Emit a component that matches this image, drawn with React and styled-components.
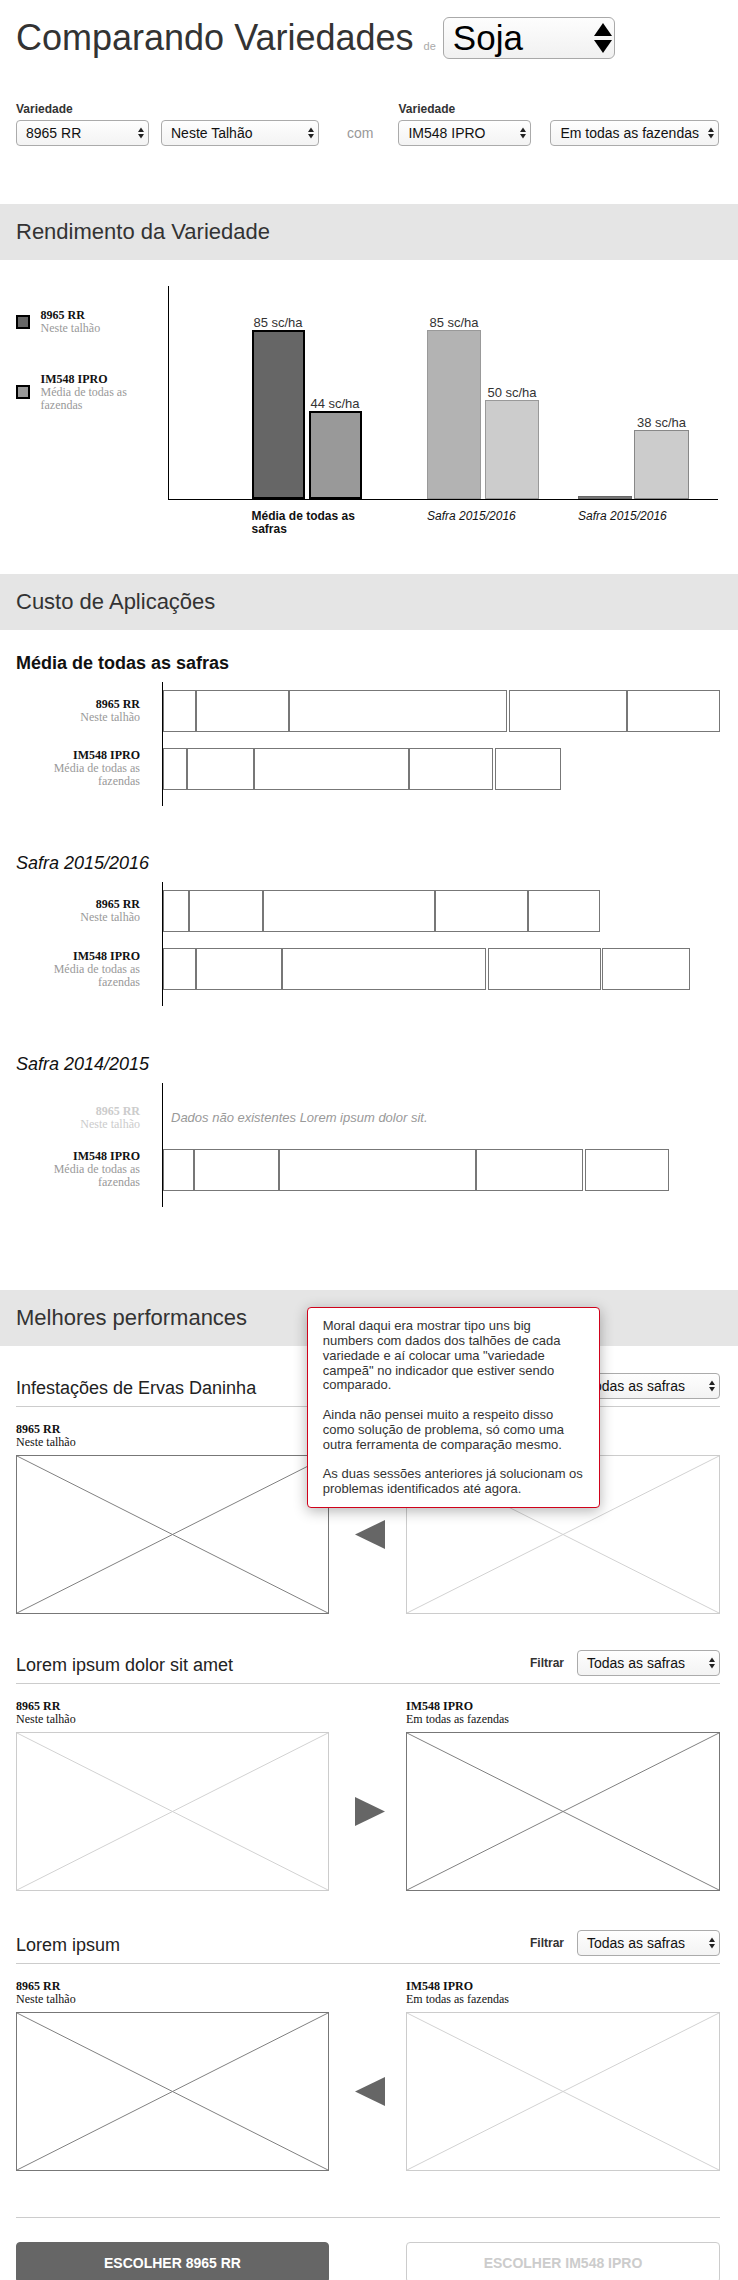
import React from "react";
import styled, { createGlobalStyle } from "styled-components";

const SANS = `"Liberation Sans", Arial, Helvetica, sans-serif`;
const SERIF = `"Liberation Serif", "Times New Roman", serif`;

const GlobalStyle = createGlobalStyle`
  *, *::before, *::after { box-sizing: border-box; }
  html, body { margin: 0; padding: 0; background: #fff; }
  body { font-family: ${SANS}; color: #333; }
`;

const Page = styled.main`
  width: 738px;
  padding-bottom: 12px;
`;

const Padded = styled.div`
  padding: 0 18px 0 16px;
`;

/* ---------- header ---------- */
const Header = styled.header`
  display: flex;
  align-items: baseline;
  padding: 17px 18px 0 16px;
`;

const Title = styled.h1`
  margin: 0;
  font-size: 36px;
  line-height: 42px;
  font-weight: normal;
  color: #333;
`;

const TitleJoin = styled.span`
  margin: 0 7px 0 10px;
  font-size: 11px;
  color: #aaa;
`;

const CropSelect = styled.div`
  display: flex;
  align-items: center;
  justify-content: space-between;
  width: 172px;
  height: 42px;
  padding: 0 2px 0 9px;
  border: 1px solid #a9a9a9;
  border-radius: 6px;
  background: linear-gradient(#fdfdfd, #f1f1f1);
  font-size: 35px;
  line-height: 40px;
  color: #000;
`;

const BigArrows = () => (
  <svg width="18" height="30" viewBox="0 0 18 30" aria-hidden="true">
    <polygon points="0,13 9,0 18,13" fill="#000" />
    <polygon points="0,17 18,17 9,30" fill="#000" />
  </svg>
);

const SmallArrows = () => (
  <svg width="6" height="12" viewBox="0 0 6 12" aria-hidden="true">
    <polygon points="0,5 3,0.5 6,5" fill="#222" />
    <polygon points="0,7 6,7 3,11.5" fill="#222" />
  </svg>
);

/* ---------- selectors row ---------- */
const Controls = styled.div`
  display: flex;
  align-items: flex-end;
  margin-top: 43px;
  padding: 0 18px 0 16px;
`;

const ControlGroup = styled.div`
  display: flex;
  flex-direction: column;
`;

const FieldLabel = styled.div`
  font-size: 12px;
  line-height: 14px;
  font-weight: bold;
  color: #333;
  margin-bottom: 4px;
`;

const SelectRow = styled.div`
  display: flex;
  gap: ${(p) => p.$gap}px;
`;

const SelectBox = styled.div`
  display: flex;
  align-items: center;
  justify-content: space-between;
  width: ${(p) => p.$w}px;
  height: 26px;
  padding: 0 4px 0 9px;
  border: 1px solid #ababab;
  border-radius: 4px;
  background: linear-gradient(#fefefe, #f3f3f3);
  font-size: 14px;
  line-height: 24px;
  color: #111;
  white-space: nowrap;
`;

const Connector = styled.span`
  font-size: 14px;
  line-height: 26px;
  color: #999;
  margin: 0 25px 0 28px;
`;

const Select = ({ w, children }) => (
  <SelectBox $w={w}>
    <span>{children}</span>
    <SmallArrows />
  </SelectBox>
);

/* ---------- section band ---------- */
const Band = styled.h2`
  margin: ${(p) => p.$mt || 0}px 0 0;
  height: 56px;
  line-height: 56px;
  padding-left: 16px;
  background: #e5e5e5;
  font-size: 22px;
  font-weight: normal;
  color: #333;
`;

/* ---------- yield chart ---------- */
const Chart = styled.div`
  display: grid;
  grid-template-columns: 151.5px 1fr;
  margin-top: 26px;
  padding: 0 20px 0 16px;
`;

const Legend = styled.div`
  display: flex;
  flex-direction: column;
  gap: 37.5px;
  padding-top: 23px;
`;

const LegendItem = styled.div`
  display: flex;
  align-items: center;
`;

const Swatch = styled.span`
  flex: none;
  width: 14px;
  height: 14px;
  margin-right: 10.5px;
  border: 2px solid #000;
  background: ${(p) => p.$fill};
`;

const LegendText = styled.div`
  width: 100px;
  font-family: ${SERIF};
  font-size: 12px;
  line-height: 13px;
  color: #999;
`;

const SerifName = styled.div`
  font-weight: bold;
  color: ${(p) => (p.$muted ? "#ccc" : "#111")};
`;

const Plot = styled.div`
  display: flex;
  align-items: flex-end;
  height: 214px;
  padding-left: 83px;
  border-left: 1px solid #000;
  border-bottom: 1px solid #000;
`;

const BarGroup = styled.div`
  display: flex;
  align-items: flex-end;
  gap: ${(p) => p.$gap}px;
  margin-left: ${(p) => p.$ml}px;
`;

const BarCol = styled.div`
  display: flex;
  flex-direction: column;
  align-items: center;
  width: ${(p) => p.$w}px;
`;

const BarValue = styled.div`
  font-size: 13px;
  line-height: 15px;
  color: #333;
  white-space: nowrap;
`;

const Bar = styled.div`
  width: 100%;
  background: ${(p) => p.$fill};
  border: ${(p) => p.$border};
`;

const XLabels = styled.div`
  grid-column: 2;
  display: flex;
  padding-left: 84px;
  margin-top: 9.5px;
`;

const XLabel = styled.div`
  width: ${(p) => p.$w}px;
  margin-left: ${(p) => p.$ml}px;
  font-size: 12px;
  line-height: 13px;
  color: #111;
  font-weight: ${(p) => p.$weight};
  font-style: ${(p) => p.$fstyle};
`;

const groups = [
  {
    ml: 0, gap: 4, w: 110, label: "Média de todas as safras", weight: "bold", fstyle: "normal",
    bars: [
      { value: "85 sc/ha", h: 169, w: 53, fill: "#666", border: "2px solid #000" },
      { value: "44 sc/ha", h: 88, w: 53, fill: "#999", border: "2px solid #000" },
    ],
  },
  {
    ml: 65.5, gap: 4, w: 112, label: "Safra 2015/2016", weight: "normal", fstyle: "italic",
    bars: [
      { value: "85 sc/ha", h: 169, w: 54, fill: "#b3b3b3", border: "1px solid #999" },
      { value: "50 sc/ha", h: 99, w: 54, fill: "#ccc", border: "1px solid #999" },
    ],
  },
  {
    ml: 39, gap: 2, w: 111, label: "Safra 2015/2016", weight: "normal", fstyle: "italic",
    bars: [
      { value: null, h: 3, w: 54, fill: "#777", border: "1px solid #666" },
      { value: "38 sc/ha", h: 69, w: 55, fill: "#ccc", border: "1px solid #888" },
    ],
  },
];

/* ---------- cost chart ---------- */
const CostHeading = styled.h3`
  margin: ${(p) => p.$mt}px 0 8px;
  font-size: 18px;
  line-height: 21px;
  color: #111;
  font-weight: ${(p) => (p.$italic ? "normal" : "bold")};
  font-style: ${(p) => (p.$italic ? "italic" : "normal")};
`;

const CostChart = styled.div`
  display: flex;
`;

const LabelCol = styled.div`
  display: flex;
  flex-direction: column;
  gap: 16px;
  width: 124px;
  margin-right: 22px;
  padding: 8px 0 16px;
`;

const RowLabel = styled.div`
  display: flex;
  flex-direction: column;
  justify-content: center;
  align-items: flex-end;
  height: 42px;
  padding-top: ${(p) => (p.$empty ? 12 : 0)}px;
  text-align: right;
  font-family: ${SERIF};
  font-size: 12px;
  line-height: 13px;
  color: ${(p) => (p.$empty ? "#ccc" : "#999")};
`;

const TrackCol = styled.div`
  flex: 1;
  display: flex;
  flex-direction: column;
  gap: 16px;
  padding: 8px 0 16px;
  border-left: 1px solid #000;
`;

const TrackRow = styled.div`
  display: flex;
  height: 42px;
`;

const Segment = styled.div`
  flex: none;
  width: ${(p) => p.$w}px;
  height: 42px;
  margin-left: ${(p) => p.$ml || 0}px;
  border: 1px solid #777;
`;

const EmptyMsg = styled.div`
  display: flex;
  align-items: center;
  height: 42px;
  padding: 12px 0 0 8px;
  font-size: 13px;
  font-style: italic;
  color: #999;
`;

const costBlocks = [
  {
    title: "Média de todas as safras", italic: false, mt: 22.5,
    rows: [
      { name: "8965 RR", sub: "Neste talhão", segs: [[33], [93], [218], [118, 2], [93]] },
      { name: "IM548 IPRO", sub: "Média de todas as fazendas", segs: [[24], [67], [155], [84], [66, 2]] },
    ],
  },
  {
    title: "Safra 2015/2016", italic: true, mt: 47.5,
    rows: [
      { name: "8965 RR", sub: "Neste talhão", segs: [[26], [74], [172], [93], [72]] },
      { name: "IM548 IPRO", sub: "Média de todas as fazendas", segs: [[33], [86], [204], [113, 1.5], [88, 1.5]] },
    ],
  },
  {
    title: "Safra 2014/2015", italic: true, mt: 47.5,
    rows: [
      { name: "8965 RR", sub: "Neste talhão", empty: "Dados não existentes Lorem ipsum dolor sit." },
      { name: "IM548 IPRO", sub: "Média de todas as fazendas", segs: [[31], [85], [197], [107], [84, 2]] },
    ],
  },
];

/* ---------- best performances ---------- */
const PerfSection = styled.section`
  position: relative;
  margin-top: 83.5px;
`;

const PerfBlock = styled.div`
  margin-top: ${(p) => p.$mt}px;
`;

const PerfHeader = styled.div`
  display: flex;
  justify-content: space-between;
  align-items: flex-end;
  padding-bottom: 7px;
  border-bottom: 1px solid #ccc;
`;

const PerfTitle = styled.h3`
  margin: 0;
  font-size: 18px;
  line-height: 21px;
  font-weight: normal;
  color: #222;
`;

const Filter = styled.div`
  display: flex;
  align-items: center;
  gap: 13px;
`;

const FilterLabel = styled.span`
  font-size: 12px;
  font-weight: bold;
  color: #333;
`;

const CardGrid = styled.div`
  display: grid;
  grid-template-columns: 313px 1fr 314px;
  margin-top: 16px;
`;

const Card = styled.div`
  display: flex;
  flex-direction: column;
`;

const CardLabel = styled.div`
  font-family: ${SERIF};
  font-size: 12px;
  line-height: 13px;
  color: #111;
  margin-bottom: 6px;
`;

const PlaceholderBox = styled.div`
  height: 159px;
  border: 1px solid ${(p) => (p.$dark ? "#777" : "#ccc")};
  svg { display: block; width: 100%; height: 100%; }
  line { stroke: ${(p) => (p.$dark ? "#808080" : "#d2d2d2")}; stroke-width: 1; }
`;

const ArrowCell = styled.div`
  display: flex;
  align-items: center;
  justify-content: center;
  padding: 32px 0 0 4px;
`;

const Placeholder = ({ dark }) => (
  <PlaceholderBox $dark={dark}>
    <svg viewBox="0 0 100 100" preserveAspectRatio="none" aria-hidden="true">
      <line x1="0" y1="0" x2="100" y2="100" vectorEffect="non-scaling-stroke" />
      <line x1="100" y1="0" x2="0" y2="100" vectorEffect="non-scaling-stroke" />
    </svg>
  </PlaceholderBox>
);

const Triangle = ({ dir }) => (
  <svg width="30" height="29" viewBox="0 0 30 29" aria-hidden="true">
    <polygon points={dir === "left" ? "30,0 30,29 0,14.5" : "0,0 0,29 30,14.5"} fill="#666" />
  </svg>
);

const Tooltip = styled.aside`
  position: absolute;
  top: 17.3px;
  left: 306.7px;
  width: 293px;
  padding: 11px 15px 10px;
  background: #fff;
  border: 1px solid #d0021b;
  border-radius: 4px;
  box-shadow: 0 3px 14px rgba(0, 0, 0, 0.3);
  font-size: 13px;
  line-height: 14.8px;
  color: #333;
  white-space: nowrap;
  p { margin: 0 0 14.8px; }
  p:last-child { margin-bottom: 0; }
`;

const Divider = styled.hr`
  margin: 46px 0 0;
  border: 0;
  border-top: 1px solid #ccc;
`;

const ButtonRow = styled.div`
  display: grid;
  grid-template-columns: 313px 1fr 314px;
  margin-top: 24px;
`;

const ChooseButton = styled.button`
  grid-column: ${(p) => (p.$primary ? 1 : 3)};
  height: 41px;
  border-radius: 4px;
  font-family: ${SANS};
  font-size: 14px;
  font-weight: bold;
  background: ${(p) => (p.$primary ? "#666" : "#fff")};
  color: ${(p) => (p.$primary ? "#fff" : "#ccc")};
  border: 1px solid ${(p) => (p.$primary ? "#666" : "#ccc")};
`;

const perfBlocks = [
  { title: "Infestações de Ervas Daninha", mt: 26.7, dir: "left", leftDark: true },
  { title: "Lorem ipsum dolor sit amet", mt: 36, dir: "right", leftDark: false },
  { title: "Lorem ipsum", mt: 39.5, dir: "left", leftDark: true },
];

export default function App() {
  return (
    <Page>
      <GlobalStyle />
      <Header>
        <Title>Comparando Variedades</Title>
        <TitleJoin>de</TitleJoin>
        <CropSelect>
          <span>Soja</span>
          <BigArrows />
        </CropSelect>
      </Header>

      <Controls>
        <ControlGroup>
          <FieldLabel>Variedade</FieldLabel>
          <SelectRow $gap={12}>
            <Select w={133}>8965 RR</Select>
            <Select w={158}>Neste Talhão</Select>
          </SelectRow>
        </ControlGroup>
        <Connector>com</Connector>
        <ControlGroup>
          <FieldLabel>Variedade</FieldLabel>
          <SelectRow $gap={19}>
            <Select w={133}>IM548 IPRO</Select>
            <Select w={169}>Em todas as fazendas</Select>
          </SelectRow>
        </ControlGroup>
      </Controls>

      <Band $mt={58}>Rendimento da Variedade</Band>
      <Chart>
        <Legend>
          <LegendItem>
            <Swatch $fill="#666" />
            <LegendText>
              <SerifName>8965 RR</SerifName>
              Neste talhão
            </LegendText>
          </LegendItem>
          <LegendItem>
            <Swatch $fill="#999" />
            <LegendText>
              <SerifName>IM548 IPRO</SerifName>
              Média de todas as fazendas
            </LegendText>
          </LegendItem>
        </Legend>
        <Plot>
          {groups.map((g, i) => (
            <BarGroup key={i} $gap={g.gap} $ml={g.ml}>
              {g.bars.map((b, j) => (
                <BarCol key={j} $w={b.w}>
                  {b.value && <BarValue>{b.value}</BarValue>}
                  <Bar $fill={b.fill} $border={b.border} style={{ height: b.h }} />
                </BarCol>
              ))}
            </BarGroup>
          ))}
        </Plot>
        <XLabels>
          {groups.map((g, i) => (
            <XLabel key={i} $w={g.w} $ml={g.ml} $weight={g.weight} $fstyle={g.fstyle}>
              {g.label}
            </XLabel>
          ))}
        </XLabels>
      </Chart>

      <Band $mt={38.5}>Custo de Aplicações</Band>
      <Padded>
        {costBlocks.map((blk, i) => (
          <div key={i}>
            <CostHeading $mt={blk.mt} $italic={blk.italic}>{blk.title}</CostHeading>
            <CostChart>
              <LabelCol>
                {blk.rows.map((r, j) => (
                  <RowLabel key={j} $empty={!!r.empty}>
                    <SerifName $muted={!!r.empty}>{r.name}</SerifName>
                    <span>{r.sub}</span>
                  </RowLabel>
                ))}
              </LabelCol>
              <TrackCol>
                {blk.rows.map((r, j) =>
                  r.empty ? (
                    <EmptyMsg key={j}>{r.empty}</EmptyMsg>
                  ) : (
                    <TrackRow key={j}>
                      {r.segs.map(([w, ml], k) => (
                        <Segment key={k} $w={w} $ml={ml} />
                      ))}
                    </TrackRow>
                  )
                )}
              </TrackCol>
            </CostChart>
          </div>
        ))}
      </Padded>

      <PerfSection>
        <Band>Melhores performances</Band>
        <Padded>
          {perfBlocks.map((b, i) => (
            <PerfBlock key={i} $mt={b.mt}>
              <PerfHeader>
                <PerfTitle>{b.title}</PerfTitle>
                <Filter>
                  <FilterLabel>Filtrar</FilterLabel>
                  <Select w={143}>Todas as safras</Select>
                </Filter>
              </PerfHeader>
              <CardGrid>
                <Card>
                  <CardLabel>
                    <SerifName>8965 RR</SerifName>
                    Neste talhão
                  </CardLabel>
                  <Placeholder dark={b.leftDark} />
                </Card>
                <ArrowCell>
                  <Triangle dir={b.dir} />
                </ArrowCell>
                <Card>
                  <CardLabel>
                    <SerifName>IM548 IPRO</SerifName>
                    Em todas as fazendas
                  </CardLabel>
                  <Placeholder dark={!b.leftDark} />
                </Card>
              </CardGrid>
            </PerfBlock>
          ))}
          <Divider />
          <ButtonRow>
            <ChooseButton $primary>ESCOLHER 8965 RR</ChooseButton>
            <ChooseButton>ESCOLHER IM548 IPRO</ChooseButton>
          </ButtonRow>
        </Padded>
        <Tooltip>
          <p>
            Moral daqui era mostrar tipo uns big<br />
            numbers com dados dos talhões de cada<br />
            variedade e aí colocar uma "variedade<br />
            campeã" no indicador que estiver sendo<br />
            comparado.
          </p>
          <p>
            Ainda não pensei muito a respeito disso<br />
            como solução de problema, só como uma<br />
            outra ferramenta de comparação mesmo.
          </p>
          <p>
            As duas sessões anteriores já solucionam os<br />
            problemas identificados até agora.
          </p>
        </Tooltip>
      </PerfSection>
    </Page>
  );
}
